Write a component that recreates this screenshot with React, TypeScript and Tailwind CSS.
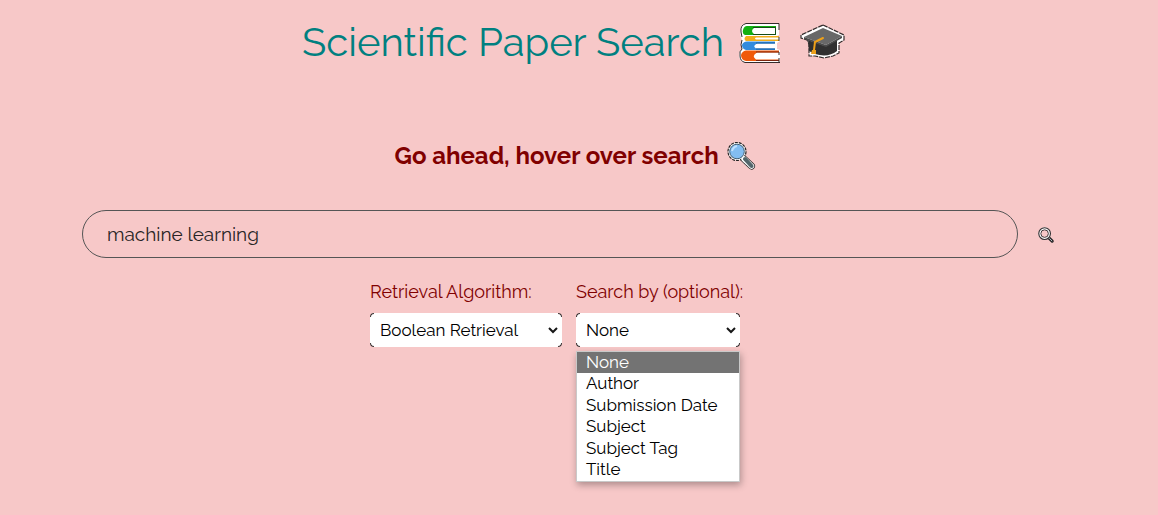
import React from "react";

const options = ["None", "Author", "Submission Date", "Subject", "Subject Tag", "Title"];

function Books() {
  return (
    <svg width="42" height="42" viewBox="0 0 42 42" className="mt-[3px] shrink-0">
      <path d="M6 0.5H40V12L38 13V14H41V18L38 20V26L41 27V39H5Q0 38 0 32Q0 28 3 26Q1 22 3 17L2 14Q-1 3 6 0.5Z" fill="#fff" />
      <path d="M40 7V0.5H7Q1 2 2 9L3 14M3 17Q1 22 3 26Q0 28 1 33Q1 38 6 39.5H41" fill="none" stroke="#332b2b" />
      <path d="M8 3H37V5H15Q11 8 15 11H37V12H6Q3 11 4 7Q5 3 8 3Z" fill="#12b012" />
      <path d="M14 4.5H36.5V11.5H14" fill="none" stroke="#174d17" />
      <path d="M7 13H40V14.5H17Q15 15.5 17 16.5H40V18H7Q4 16 7 13Z" fill="#f2ad1c" />
      <path d="M8 18.5H36V20.5H18Q13 23 17 25.5H36V27H7Q3 26 3 22Q4 18.5 8 18.5Z" fill="#328bdd" />
      <path d="M17 20H36M17 26H36" stroke="#155a9c" />
      <path d="M7 27.5H40V29.5H18Q12 33 17 36.5H40V38H7Q2 37 2 32Q3 28 7 27.5Z" fill="#f05a0a" />
      <path d="M17 29H40M17 37.5H40" stroke="#7d2610" />
      <path d="M40 14V18M40 29V32M40 35V39" stroke="#332b2b" />
    </svg>
  );
}

function Graduation() {
  return (
    <svg width="46" height="36" viewBox="0 0 46 36" className="shrink-0">
      <path d="M23 1L44 11V16L39 19V29L33 32L24 34L15 32H9V20L7 16L1 14V11Z" fill="#fff" stroke="#332b2b" strokeWidth="1.2" strokeDasharray="5 1" />
      <path d="M8 16L25 22L37 16V27Q28 34 15 30L9 27Z" fill="#303030" />
      <path d="M23 4L42 12L26 21L4 13Z" fill="#686868" />
      <path d="M4 13L26 21L42 12V14L26 23L4 15Z" fill="#4a4a4a" />
      <path d="M23 14L15 18L14 26" fill="none" stroke="#eda01a" strokeWidth="2" strokeLinecap="round" />
      <path d="M12 26H16V30H11Z" fill="#eda01a" />
    </svg>
  );
}

function Magnifier() {
  return (
    <svg width="29" height="29" viewBox="0 0 29 29" className="mt-px shrink-0">
      <path d="M17 17L24.5 24" stroke="#222" strokeWidth="7" strokeLinecap="round" />
      <circle cx="10" cy="9.5" r="9" fill="#fff" stroke="#222" strokeWidth="1.2" strokeDasharray="3 1" />
      <path d="M17 17L24.5 24" stroke="#fff" strokeWidth="5.5" strokeLinecap="round" strokeDasharray="2 1" />
      <circle cx="10" cy="9.5" r="7.3" fill="#83bdf1" stroke="#445e72" />
      <path d="M5 9Q6 5 10 4" fill="none" stroke="#c2e2ff" strokeWidth="2" />
      <path d="M18 17L24.5 24" stroke="#53666b" strokeWidth="4" strokeLinecap="round" />
    </svg>
  );
}

function SearchIcon() {
  return (
    <svg width="17" height="17" viewBox="0 0 18 18" className="shrink-0">
      <path d="M11 11L15 15" stroke="#292729" strokeWidth="3.4" strokeLinecap="round" />
      <circle cx="7" cy="7" r="5.2" fill="#f7c8c8" stroke="#fff" strokeWidth="3" />
      <circle cx="7" cy="7" r="6.2" fill="none" stroke="#332e30" strokeWidth="1.2" />
      <circle cx="7" cy="7" r="4" fill="none" stroke="#332e30" strokeWidth="1" />
      <path d="M12 12L15 15" stroke="#bdc7ca" />
    </svg>
  );
}

function Select({ value, width }: { value: string; width: string }) {
  return (
    <button type="button" className={`${width} relative flex h-[34px] items-center justify-between rounded-[5px] bg-white pr-1 pl-[10px] text-[17px] text-black`}>
      <span className="pt-[2px] whitespace-nowrap">{value}</span>
      <svg width="10" height="8" viewBox="0 0 10 8">
        <path d="M1 2L5 6L9 2" fill="none" stroke="#171717" strokeWidth="2" />
      </svg>
      <span className="absolute top-0 left-0 h-1 w-1 rounded-tl-[5px] border-t border-l border-[#3b3434]" />
      <span className="absolute top-0 right-0 h-1 w-1 rounded-tr-[5px] border-t border-r border-[#3b3434]" />
      <span className="absolute bottom-0 left-0 h-1 w-1 rounded-bl-[5px] border-b border-l border-[#3b3434]" />
      <span className="absolute right-0 bottom-0 h-1 w-1 rounded-br-[5px] border-r border-b border-[#3b3434]" />
    </button>
  );
}

export default function App() {
  return (
    <main className="h-[515px] w-[1158px] overflow-hidden bg-[#f7c8c8] font-['Raleway','Lato',sans-serif]">
      <header className="flex h-[84px] items-center pl-[302px] text-[#008080]">
        <h1 className="w-[437px] text-[40px] leading-[48px] font-normal whitespace-nowrap">Scientific Paper Search</h1>
        <Books />
        <div className="w-[19px]" />
        <Graduation />
      </header>
      <section className="flex h-[126px] items-start pt-[57px] pl-[394.5px]">
        <h2 className="w-[332px] text-[24px] leading-[29px] font-bold whitespace-nowrap text-[#800000]">Go ahead, hover over search</h2>
        <Magnifier />
      </section>
      <form className="flex items-center pl-[82px]">
        <input aria-label="Search papers" defaultValue="machine learning" className="h-12 w-[936px] rounded-full border border-[#555] bg-transparent px-6 text-[19px] text-[#292525] outline-none" />
        <button type="button" aria-label="Search" className="mt-[2px] ml-[20px]"><SearchIcon /></button>
      </form>
      <section className="flex gap-[14px] pt-[21px] pl-[370px] text-[18px] text-[#800000]">
        <div className="w-[192px]">
          <label className="block h-[34px] leading-[25px] whitespace-nowrap">Retrieval Algorithm:</label>
          <Select value="Boolean Retrieval" width="w-[192px]" />
        </div>
        <div className="w-[164px]">
          <label className="block h-[34px] leading-[25px] whitespace-nowrap">Search by (optional):</label>
          <Select value="None" width="w-[164px]" />
          <ul className="mt-1 h-[131px] border border-[#c9c9c9] bg-white text-[17px] text-black shadow-[1px_3px_7px_#0000004d]">
            {options.map((option, index) => (
              <li key={option} className={index === 0 ? "h-[21.4px] bg-[#737373] pl-[9px] leading-[21px] text-white" : "h-[21.4px] pl-[9px] leading-[21px]"}>{option}</li>
            ))}
          </ul>
        </div>
      </section>
    </main>
  );
}
